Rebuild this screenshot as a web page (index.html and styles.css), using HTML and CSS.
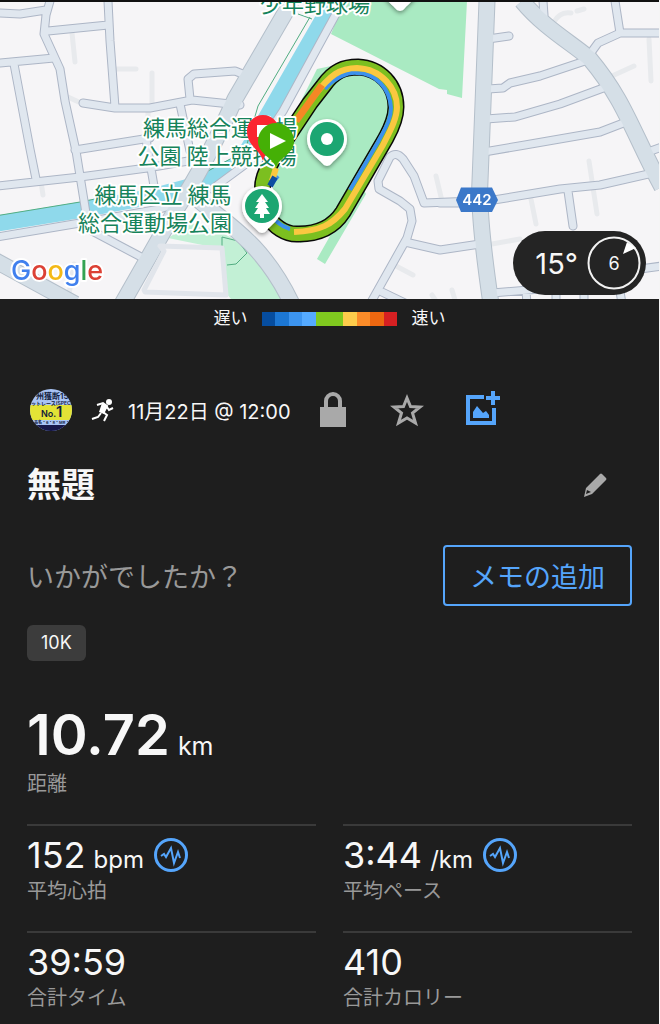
FILE: index.html
```html
<!DOCTYPE html>
<html lang="ja">
<head>
<meta charset="utf-8">
<meta name="viewport" content="width=device-width, initial-scale=1">
<title>無題</title>
<link rel="stylesheet" href="styles.css">
</head>
<body>
<main class="activity">
  <section class="map">
    <svg class="map-canvas" viewBox="0 0 659 299" preserveAspectRatio="xMidYMid slice" role="img" aria-label="地図">
      <defs>
        <path id="major" d="M292 0L235 98Q205 165 175 210L122 303M195 196C225 222 262 240 292 303M487 0L480 180Q478 215 491 303M522 0C545 28 575 44 590 58C625 100 632 130 662 186M-4 260L75 303"/>
        <g id="minor">
          <path d="M0 12L20 13L46 9M50 0L46 14L44 33L60 68L65 100L76 150L86 212M48 30L108 24M0 62L54 57M108 0L110 40L115 106M14 63L30 148L36 178M83 102L115 107L150 107L192 99L240 104M190 98L188 78L194 73L235 70L250 76M75 149L150 137M-3 185L80 176L147 167L200 158M180 103L190 150M146 138L154 185M-3 236L80 222L160 208L195 196M92 230L143 257M343 0L283 110L250 160L212 188"/>
          <path d="M488 38L509 35M488 88L503 87L510 82L540 75L585 60M486 118L515 116L560 103L606 86M484 151L525 144L600 131L626 121M590 53L598 42L620 32L662 32M615 0L620 32M543 0L544 14M645 152L662 146M440 202L475 202L500 198L560 188L600 184L662 170M568 190L573 225M480 243L440 249L405 241M370 303L407 237L412 220L410 208L400 200L379 188L378 180L390 156Q396 150 403 158L414 175L424 202L475 200M382 291L405 302M492 292L540 288M526 290L527 303M556 290V303M584 290V303M620 290L622 303M640 268L662 265"/>
        </g>
        <path id="track" d="M264 198C258 178 270 164 280 147L310 102L324 84C334 70 344 66 358 66C380 67 396 84 396 106C396 116 392 126 386 137L343 211C334 225 319 233 299 233C286 234 274 226 265 212"/>
        <filter id="pin-shadow" x="-30%" y="-30%" width="160%" height="160%"><feDropShadow dx="0" dy="2" stdDeviation="2" flood-opacity=".4"/></filter>
        <path id="pin" d="M0 27Q-3 27 -5 24C-8 20 -20 13 -20 0A20 20 0 1 1 20 0C20 13 8 20 5 24Q3 27 0 27Z"/>
      </defs>
      <rect class="land" width="659" height="299"/>
      <g class="park">
        <path d="M344 0L331 33L439 88L447 89V93L462 97L467 0Z"/>
        <path d="M276 150L317 68L345 62L390 80L396 120L340 225L300 241L270 225Z"/>
        <path d="M363 187L366 193L325 263L317 258L330 235L300 242V233Z"/>
      </g>
      <path class="park-light" d="M168 237L192 222L222 232C250 245 275 265 287 299H232L215 280L222 248Z"/>
      <path class="paths" d="M72 32L75 61M116 68H136M152 72V108L148 110V138M68 96L83 103M41 181L43 194M554 21Q560 10 571 12M577 10L584 8M649 38L651 80M612 75L634 65M589 160L597 213M531 198L536 223M492 243L520 238M452 289L455 299M436 175L442 200M396 265L413 274M432 294L436 300M74 263L68 299"/>
      <path class="river" d="M-5 223L80 209L150 196L195 184L240 162L270 110L335 -3"/>
      <path class="trail" d="M-5 215L80 201L110 195M310 16L303 28L258 105L245 150L208 170M298 13L312 18M222 245V236L238 240L247 252L236 263L227 264"/>
      <use href="#minor" class="minor-case"/>
      <use href="#major" class="major-case"/>
      <use href="#minor" class="minor-fill"/>
      <use href="#major" class="major-fill"/>
      <path class="lot" d="M144 289L164 250L160 245L222 247L226 294L145 291Z"/>
      <g class="track">
        <use href="#track" class="track-edge"/>
        <use href="#track" class="track-green"/>
        <path class="track-blue" d="M325 88C335 76 348 71 357 72C376 72 390 88 391 107C391 118 386 126 378 141L350 189M267 208Q276 224 290 228M272 182L278 175"/>
        <path class="track-yellow" d="M314 95C330 74 340 67 357 67C382 68 397 88 397 106C397 118 389 132 383 144L345 208C332 224 320 230 294 231M272 180L276 167"/>
        <path class="track-orange" d="M296 120L322 84"/>
        <path class="track-navy" d="M270 185L275 176"/>
      </g>
      <g class="place" text-anchor="middle">
        <text x="315" y="11">少年野球場</text>
        <text x="220" y="135">練馬総合運動場</text>
        <text x="217" y="163">公園 陸上競技場</text>
        <text x="163" y="202">練馬区立 練馬</text>
        <text x="155" y="230">総合運動場公園</text>
      </g>
      <g filter="url(#pin-shadow)">
        <use href="#pin" x="327" y="138" class="white"/>
        <use href="#pin" x="262" y="205" class="white"/>
        <use href="#pin" x="400" y="-17" class="white"/>
      </g>
      <circle class="poi" cx="327" cy="138" r="17"/>
      <circle class="white" cx="327" cy="138" r="6"/>
      <circle class="poi" cx="262" cy="205" r="17"/>
      <path class="white" d="M262 193L268 201H265L269 207H266L270 213H264V217H260V213H254L258 207H255L259 201H256Z"/>
      <path class="finish" d="M263 160C260 148 247 145 247 130A16 16 0 0 1 279 130C279 145 266 148 263 160Z"/>
      <path class="white" d="M257 124H270V136H257Z"/>
      <path class="start" d="M276 166C272 156 258 153 258 140A18 18 0 0 1 294 140C294 153 280 156 276 166Z"/>
      <path class="white" d="M270 132L286 140L270 148Z"/>
      <path class="shield" d="M461 186.500H492L498 199L492 211H461L456 199Z"/>
      <text class="shield-text" x="477" y="204" text-anchor="middle">442</text>
      <text class="google" x="11" y="279"><tspan class="g-blue">G</tspan><tspan class="g-red">o</tspan><tspan class="g-yellow">o</tspan><tspan class="g-blue">g</tspan><tspan class="g-green">l</tspan><tspan class="g-red">e</tspan></text>
    </svg>
    <div class="weather">
      <span>15°</span>
      <span class="wind">6
        <svg class="wind-dial" viewBox="0 0 54 54" aria-hidden="true"><circle cx="27" cy="27" r="25.500"/><path d="M36 18L40 6L49 12Z"/></svg>
      </span>
    </div>
  </section>

  <div class="legend">
    <span>遅い</span>
    <div class="scale"><i class="c1"></i><i class="c2"></i><i class="c3"></i><i class="c4"></i><i class="c5"></i><i class="c5"></i><i class="c6"></i><i class="c7"></i><i class="c8"></i><i class="c9"></i></div>
    <span>速い</span>
  </div>

  <div class="meta">
    <svg class="avatar" viewBox="0 0 42 42" role="img" aria-label="プロフィール">
      <defs><clipPath id="round"><circle cx="21" cy="21" r="21"/></clipPath></defs>
      <g clip-path="url(#round)">
        <rect width="42" height="42" fill="#a9c4f5"/>
        <rect y="16" width="42" height="15" fill="#e3e336"/>
        <rect y="36" width="42" height="6" fill="#17184a"/>
        <g class="bib">
          <text x="6" y="10" font-size="8">州獲断155</text>
          <text x="1" y="16" font-size="5">ットレース(SPECIAL</text>
          <text x="11" y="28" font-size="9">No.</text>
          <text x="26" y="28" font-size="15">1</text>
          <text x="4" y="35" font-size="4">品名・6・8・MR・T1</text>
        </g>
      </g>
    </svg>
    <svg class="runner" viewBox="0 0 24 24" aria-hidden="true">
      <circle cx="18" cy="4" r="3"/>
      <path d="M6 7L12 5L16 8L12 14L16 17L13 23M10 15L7 19L1 21M16 9L18 12L22 10" fill="none" stroke="#fff" stroke-width="2"/><path d="M11 5L17 8L13 16L8 14Z"/>
    </svg>
    <time class="date">11月22日 @ 12:00</time>
    <button class="icon lock" aria-label="非公開"><svg viewBox="0 0 28 36"><path d="M1 15H27V35H1Z"/><path d="M7 17V9a7 7 0 0 1 14 0V17" fill="none" stroke="currentColor" stroke-width="4"/></svg></button>
    <button class="icon star" aria-label="お気に入り"><svg viewBox="0 0 34 34"><path d="M17 5L20.500 13.500L30 14L22.500 20L25.500 30L17 25L8.500 30L11.500 20L4 14L13.500 13.500Z" fill="none" stroke="currentColor" stroke-width="3"/></svg></button>
    <button class="icon photo" aria-label="写真を追加"><svg viewBox="0 0 36 40"><path d="M19 7H3V33H29V18" fill="none" stroke="currentColor" stroke-width="4"/><path d="M28 1V15M21 8H35" fill="none" stroke="currentColor" stroke-width="4"/><path d="M8 28V22L12 16L18 23L21 21L24 25V28Z"/></svg></button>
  </div>

  <div class="title-row">
    <h1>無題</h1>
    <button class="icon edit" aria-label="編集"><svg viewBox="0 0 24 24"><path fill-rule="evenodd" d="M17 1Q18 0 19 1L23 5Q24 6 23 7L9 21L1 24L3 15ZM4 17L3 21L8 19Z"/></svg></button>
  </div>

  <div class="note-row">
    <p>いかがでしたか？</p>
    <button class="add-note">メモの追加</button>
  </div>

  <span class="tag">10K</span>

  <section class="distance">
    <p class="value">10.72<small>km</small></p>
    <p class="label">距離</p>
  </section>

  <section class="stats">
    <div class="stat">
      <p class="value">152<small>bpm</small><button class="pulse" aria-label="心拍グラフ"><svg viewBox="0 0 34 34"><circle cx="17" cy="17" r="15.500"/><path d="M7 18L10 16L12 19L17 10L20 25L24 14L26 20"/></svg></button></p>
      <p class="label">平均心拍</p>
    </div>
    <div class="stat">
      <p class="value">3:44<small>/km</small><button class="pulse" aria-label="ペースグラフ"><svg viewBox="0 0 34 34"><circle cx="17" cy="17" r="15.500"/><path d="M7 18L10 16L12 19L17 10L20 25L24 14L26 20"/></svg></button></p>
      <p class="label">平均ペース</p>
    </div>
    <div class="stat">
      <p class="value">39:59</p>
      <p class="label">合計タイム</p>
    </div>
    <div class="stat">
      <p class="value">410</p>
      <p class="label">合計カロリー</p>
    </div>
  </section>
</main>
</body>
</html>
```

FILE: styles.css
```css
* { box-sizing: border-box; }

body {
  margin: 0;
  background: #1e1e1e;
  color: #f7f7f7;
  font-family: Inter, "Noto Sans CJK JP", sans-serif;
}

p, h1 { margin: 0; }

button {
  padding: 0;
  border: 0;
  background: none;
  font-family: inherit;
  cursor: pointer;
}

svg { display: block; }

.activity {
  min-height: 100vh;
  border-right: 1px solid #f5f5f5;
  overflow: hidden;
}

/* Map */
.map {
  position: relative;
  border-top: 2px solid #111;
  margin-bottom: 9px;
}

.map-canvas {
  width: 100%;
  height: 297px;
}

.land { fill: #f6f5f7; }
.park { fill: #a9eac2; }
.park-light { fill: #c2f0d5; }
.white { fill: #fff; }
.poi { fill: #1ca672; }
.finish { fill: #fb2530; }
.start { fill: #45b006; }

.map-canvas use,
.river, .trail, .paths, .lot, .track path {
  stroke-linejoin: round;
}

.river { fill: none; stroke: #8fd9eb; stroke-width: 16px; }
.trail { fill: none; stroke: #52ad82; stroke-width: 1px; }
.paths { fill: none; stroke: #e8eaed; stroke-width: 5px; stroke-linecap: round; }
.minor-case { fill: none; stroke: #adb6c6; stroke-width: 9px; stroke-linecap: round; }
.minor-fill { fill: none; stroke: #e0e7ef; stroke-width: 7px; stroke-linecap: round; }
.major-case { fill: none; stroke: #b4bfca; stroke-width: 17px; }
.major-fill { fill: none; stroke: #d5dfe7; stroke-width: 15px; }
.lot { fill: #f5f4f6; stroke: #e1e5eb; stroke-width: 5px; }

.track { fill: none; }
.track-edge { stroke: #080808; stroke-width: 17px; }
.track-green { stroke: #7cbf20; stroke-width: 14px; }
.track-blue { stroke: #3c91ed; stroke-width: 4px; }
.track-yellow { stroke: #fac840; stroke-width: 6px; }
.track-orange { stroke: #f68725; stroke-width: 7px; }
.track-navy { stroke: #0b4da2; stroke-width: 6px; }

.place {
  fill: #16835a;
  stroke: #fff;
  stroke-width: 4px;
  stroke-linejoin: round;
  paint-order: stroke;
  font-family: "Noto Sans CJK JP", sans-serif;
  font-size: 22px;
}

.shield { fill: #3b78c9; }
.shield-text { fill: #fff; font-size: 15px; font-weight: 600; }

.google {
  font-size: 27px;
  font-weight: 500;
  stroke: #fff;
  stroke-width: 4px;
  stroke-linejoin: round;
  paint-order: stroke;
}

.g-blue { fill: #4080ee; }
.g-red { fill: #dc4135; }
.g-yellow { fill: #f4b917; }
.g-green { fill: #34a353; }

.weather {
  position: absolute;
  right: 13px;
  bottom: 4px;
  display: flex;
  align-items: center;
  gap: 9px;
  height: 64px;
  padding: 0 5px 0 22px;
  border-radius: 32px;
  background: #242424;
  font-size: 29px;
}

.wind {
  position: relative;
  display: grid;
  place-items: center;
  width: 54px;
  height: 54px;
  font-size: 18px;
}

.wind-dial {
  position: absolute;
  inset: 0;
  fill: #fff;
}

.wind-dial circle {
  fill: none;
  stroke: #f2f2f2;
  stroke-width: 2px;
}

/* Speed legend */
.legend {
  display: flex;
  justify-content: center;
  align-items: center;
  gap: 14px;
  height: 21px;
  font-size: 17px;
  line-height: 21px;
}

.scale { display: flex; width: 136px; }
.scale i { width: 14px; height: 14px; }
.c1 { background: #064d9f; }
.c2 { background: #1c77d4; }
.c3 { background: #3c94ef; }
.c4 { background: #55aaff; }
.c5 { background: #80c91f; }
.c6 { background: #fdcc4b; }
.c7 { background: #fb8c29; }
.c8 { background: #ed6710; }
.c9 { background: #d62022; }

/* Activity header */
.meta {
  display: flex;
  align-items: center;
  height: 44px;
  margin-top: 59px;
  padding: 0 30px;
}

.avatar { width: 42px; height: 42px; }
.bib { fill: #111b3c; font-weight: 600; }
.runner { width: 24px; height: 24px; margin-left: 19px; fill: #fff; }
.date { margin-left: 13px; font-size: 20px; white-space: nowrap; }
.icon { color: #a9a9a9; }
.icon svg { width: 100%; fill: currentColor; }
.lock { width: 28px; margin-left: 28px; }
.star { width: 34px; margin-left: 43px; }
.photo { width: 36px; margin-left: 41px; color: #55a5fb; }
.edit { width: 24px; }

.title-row {
  display: flex;
  align-items: center;
  justify-content: space-between;
  height: 50px;
  margin-top: 28px;
  padding: 0 52px 0 27px;
}

h1 { font-size: 34px; line-height: 50px; font-weight: 700; }

.note-row {
  display: flex;
  align-items: center;
  justify-content: space-between;
  margin-top: 35px;
  padding: 0 27px;
  color: #999;
  font-size: 27px;
}

.add-note {
  height: 61px;
  padding: 0 25px;
  border: 2px solid #55a5fb;
  border-radius: 4px;
  color: #55a5fb;
  font-size: 27px;
}

.tag {
  display: inline-block;
  margin: 19px 27px 0;
  padding: 0 14px;
  border-radius: 6px;
  background: #3c3c3c;
  font-size: 18px;
  line-height: 36px;
}

.label {
  color: #999;
  font-size: 20px;
  line-height: 28px;
}

.value {
  display: flex;
  align-items: baseline;
  gap: 8px;
}

.value small { font-size: 25px; font-weight: 400; }

.distance { padding: 41px 27px 0; }

.distance .value {
  height: 68px;
  font-size: 56px;
  font-weight: 600;
  line-height: 66px;
}

/* Stats grid */
.stats {
  display: grid;
  grid-template-columns: 1fr 1fr;
  gap: 26px 27px;
  margin-top: 26px;
  padding: 0 27px;
}

.stat { border-top: 2px solid #3a3a3a; }

.stat .value {
  height: 51px;
  font-size: 36px;
  line-height: 59px;
}

.stat small { font-size: 24px; }

.pulse {
  align-self: center;
  width: 34px;
  margin: 6px 0 0 2px;
}

.pulse svg {
  fill: none;
  stroke: #55a5fb;
  stroke-width: 2px;
}

.pulse circle { stroke-width: 3px; }
```
